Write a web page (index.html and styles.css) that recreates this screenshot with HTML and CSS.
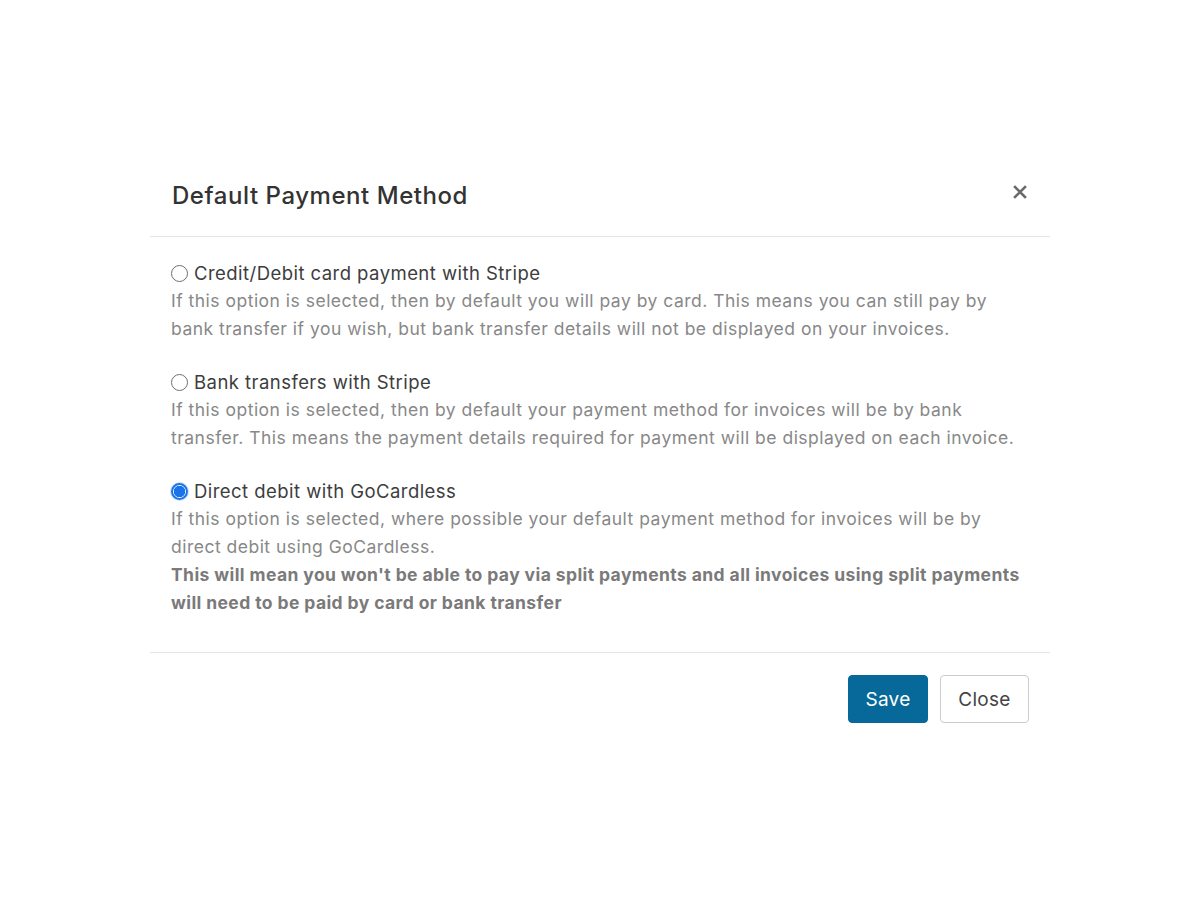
FILE: index.html
```html
<!DOCTYPE html>
<html lang="en">
<head>
<meta charset="utf-8">
<title>Default Payment Method</title>
<link rel="stylesheet" href="styles.css">
</head>
<body>
<div class="page">
  <div class="modal">
    <div class="modal-header">
      <h2 class="modal-title">Default Payment Method</h2>
      <button class="close-x" aria-label="Close">
        <svg width="14" height="14" viewBox="0 0 14 14"><path d="M2 2 L12 12 M12 2 L2 12" stroke="#6b6b6b" stroke-width="2.6" stroke-linecap="square"/></svg>
      </button>
    </div>
    <div class="modal-body">
      <div class="option">
        <label class="option-label"><span class="radio"></span>Credit/Debit card payment with Stripe</label>
        <p class="desc">If this option is selected, then by default you will pay by card. This means you can still pay by<br>bank transfer if you wish, but bank transfer details will not be displayed on your invoices.</p>
      </div>
      <div class="option">
        <label class="option-label"><span class="radio"></span>Bank transfers with Stripe</label>
        <p class="desc">If this option is selected, then by default your payment method for invoices will be by bank<br>transfer. This means the payment details required for payment will be displayed on each invoice.</p>
      </div>
      <div class="option">
        <label class="option-label"><span class="radio checked"></span>Direct debit with GoCardless</label>
        <p class="desc">If this option is selected, where possible your default payment method for invoices will be by<br>direct debit using GoCardless.<br><strong>This will mean you won't be able to pay via split payments and all invoices using split payments<br>will need to be paid by card or bank transfer</strong></p>
      </div>
    </div>
    <div class="modal-footer">
      <button class="btn btn-primary">Save</button>
      <button class="btn btn-default">Close</button>
    </div>
  </div>
</div>
</body>
</html>
```
FILE: styles.css
```css
* { box-sizing: border-box; }
html, body { margin: 0; padding: 0; background: #fff; }
body { font-family: Inter, "Noto Sans", sans-serif; color: #444; }
.page { padding-top: 160px; display: flex; justify-content: center; }
.modal { width: 900px; background: #fff; }
.modal-header {
  height: 77px;
  display: flex; align-items: center; justify-content: space-between;
  padding: 0 22px 6px 22px;
  border-bottom: 1px solid #e5e5e5;
}
.modal-title { margin: 0; font-size: 24px; font-weight: 500; color: #333; letter-spacing: 0.55px; }
.close-x { border: 0; background: none; padding: 0; width: 16px; height: 16px; margin-bottom: 6px; display: flex; align-items: center; justify-content: center; cursor: pointer; }
.modal-body { padding: 23px 21px 35px; }
.option { margin-bottom: 26px; }
.option:last-child { margin-bottom: 0; }
.option-label { display: flex; align-items: center; font-size: 18.5px; letter-spacing: 0.45px; color: #3d3d3d; line-height: 27px; }
.radio {
  width: 17px; height: 17px; border-radius: 50%; border: 1px solid #6e6e6e;
  margin-right: 6px; flex: none; background: #fff;
}
.radio.checked { border: 2px solid #1a73e8; box-shadow: 0 0 0 1px #cfe0f7; background: radial-gradient(circle, #1a73e8 0 5.5px, #fff 6px); }
.desc { margin: 0; font-size: 17.5px; letter-spacing: 0.49px; line-height: 28px; color: #888; }
.desc strong { font-weight: 700; color: #7a7a7a; letter-spacing: 0.4px; }
.modal-footer {
  border-top: 1px solid #e5e5e5;
  display: flex; justify-content: flex-end; gap: 12px;
  padding: 22px 21px 22px;
}
.btn { font-family: Inter, "Noto Sans", sans-serif; font-size: 19px; height: 48px; border-radius: 4px; padding: 0 12px; cursor: pointer; letter-spacing: 0.3px; }
.btn-primary { background: #06699a; color: #fff; border: 1px solid #06699a; width: 80px; }
.btn-default { background: #fff; color: #444; border: 1px solid #ccc; width: 89px; }
```
